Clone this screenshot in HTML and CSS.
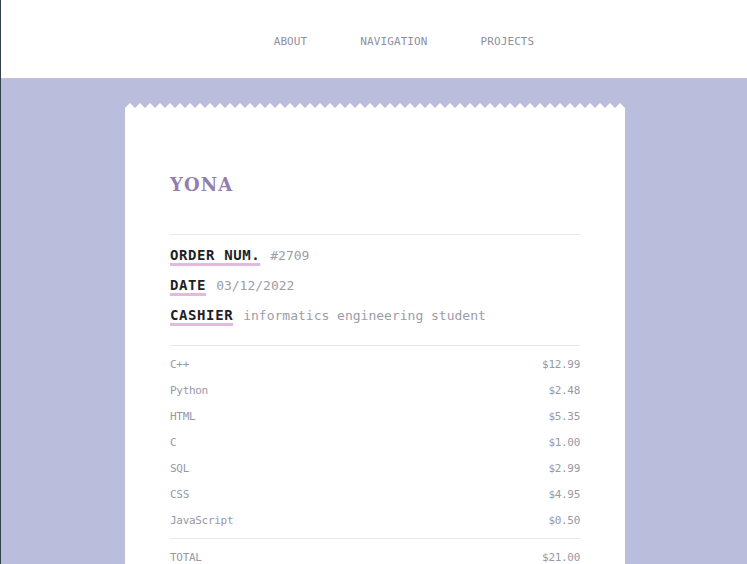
FILE: index.html
```html
<!DOCTYPE html>
<html lang="en">
<head>
<meta charset="utf-8">
<title>Yona</title>
<link rel="stylesheet" href="styles.css">
</head>
<body>
<header class="topbar">
  <nav class="nav">
    <a class="nav-link" href="#">ABOUT</a>
    <a class="nav-link" href="#">NAVIGATION</a>
    <a class="nav-link" href="#">PROJECTS</a>
  </nav>
</header>
<main class="stage">
  <section class="receipt">
    <svg class="zigzag" width="500" height="5" viewBox="0 0 500 5" aria-hidden="true">
      <defs>
        <pattern id="teeth" width="10" height="5" patternUnits="userSpaceOnUse">
          <polygon points="0,5 5,0 10,5" fill="#ffffff"/>
        </pattern>
      </defs>
      <rect width="500" height="5" fill="url(#teeth)"/>
    </svg>
    <div class="paper">
      <h1 class="title">YONA</h1>
      <div class="info">
        <div class="info-row"><span class="label">ORDER NUM.</span><span class="value">#2709</span></div>
        <div class="info-row"><span class="label">DATE</span><span class="value">03/12/2022</span></div>
        <div class="info-row"><span class="label">CASHIER</span><span class="value">informatics engineering student</span></div>
      </div>
      <ul class="items">
        <li class="item"><span>C++</span><span>$12.99</span></li>
        <li class="item"><span>Python</span><span>$2.48</span></li>
        <li class="item"><span>HTML</span><span>$5.35</span></li>
        <li class="item"><span>C</span><span>$1.00</span></li>
        <li class="item"><span>SQL</span><span>$2.99</span></li>
        <li class="item"><span>CSS</span><span>$4.95</span></li>
        <li class="item"><span>JavaScript</span><span>$0.50</span></li>
      </ul>
      <div class="total item"><span>TOTAL</span><span>$21.00</span></div>
    </div>
  </section>
</main>
</body>
</html>
```
FILE: styles.css
```css
html, body {
  margin: 0;
  padding: 0;
}
body {
  border-left: 1px solid #35414f;
  min-height: 100vh;
  box-sizing: border-box;
  background: #bbbddc;
  font-family: "DejaVu Sans Mono", "Liberation Mono", monospace;
}
.topbar {
  background: #ffffff;
  height: 78px;
  display: flex;
  align-items: center;
  justify-content: center;
  padding-left: 60px;
  padding-top: 5px;
  box-sizing: border-box;
}
.nav {
  display: flex;
  gap: 53px;
}
.nav-link {
  font-size: 11px;
  letter-spacing: 0.1px;
  color: #8e8fa0;
  text-decoration: none;
}
.stage {
  background: #bbbddc;
  padding-top: 25px;
  display: flex;
  justify-content: center;
  padding-left: 2px;
}
.receipt {
  width: 500px;
  display: flex;
  flex-direction: column;
}
.zigzag {
  display: block;
}
.paper {
  background: #ffffff;
  padding: 65px 45px 40px;
}
.title {
  margin: 0;
  font-family: "DejaVu Serif", "Liberation Serif", serif;
  font-weight: bold;
  font-size: 18px;
  line-height: 24px;
  letter-spacing: 1.1px;
  color: #937eae;
  padding-bottom: 37px;
  border-bottom: 1px solid #e8e8ec;
}
.info {
  padding: 5px 0 15px;
  border-bottom: 1px solid #e8e8ec;
}
.info-row {
  display: flex;
  align-items: baseline;
  gap: 10px;
  height: 30px;
  line-height: 30px;
}
.label {
  font-weight: bold;
  font-size: 14px;
  letter-spacing: 0.6px;
  color: #1f1f26;
  text-decoration: underline;
  text-decoration-color: #e4b9df;
  text-decoration-thickness: 3px;
  text-underline-offset: 2.5px;
  text-decoration-skip-ink: none;
}
.value {
  font-size: 13px;
  color: #9c9caa;
}
.items {
  list-style: none;
  margin: 0;
  padding: 6px 0 4px;
  border-bottom: 1px solid #e8e8ec;
}
.item {
  display: flex;
  justify-content: space-between;
  font-size: 11px;
  letter-spacing: -0.3px;
  line-height: 26px;
  color: #9898a6;
}
.total {
  padding-top: 6px;
}
```
